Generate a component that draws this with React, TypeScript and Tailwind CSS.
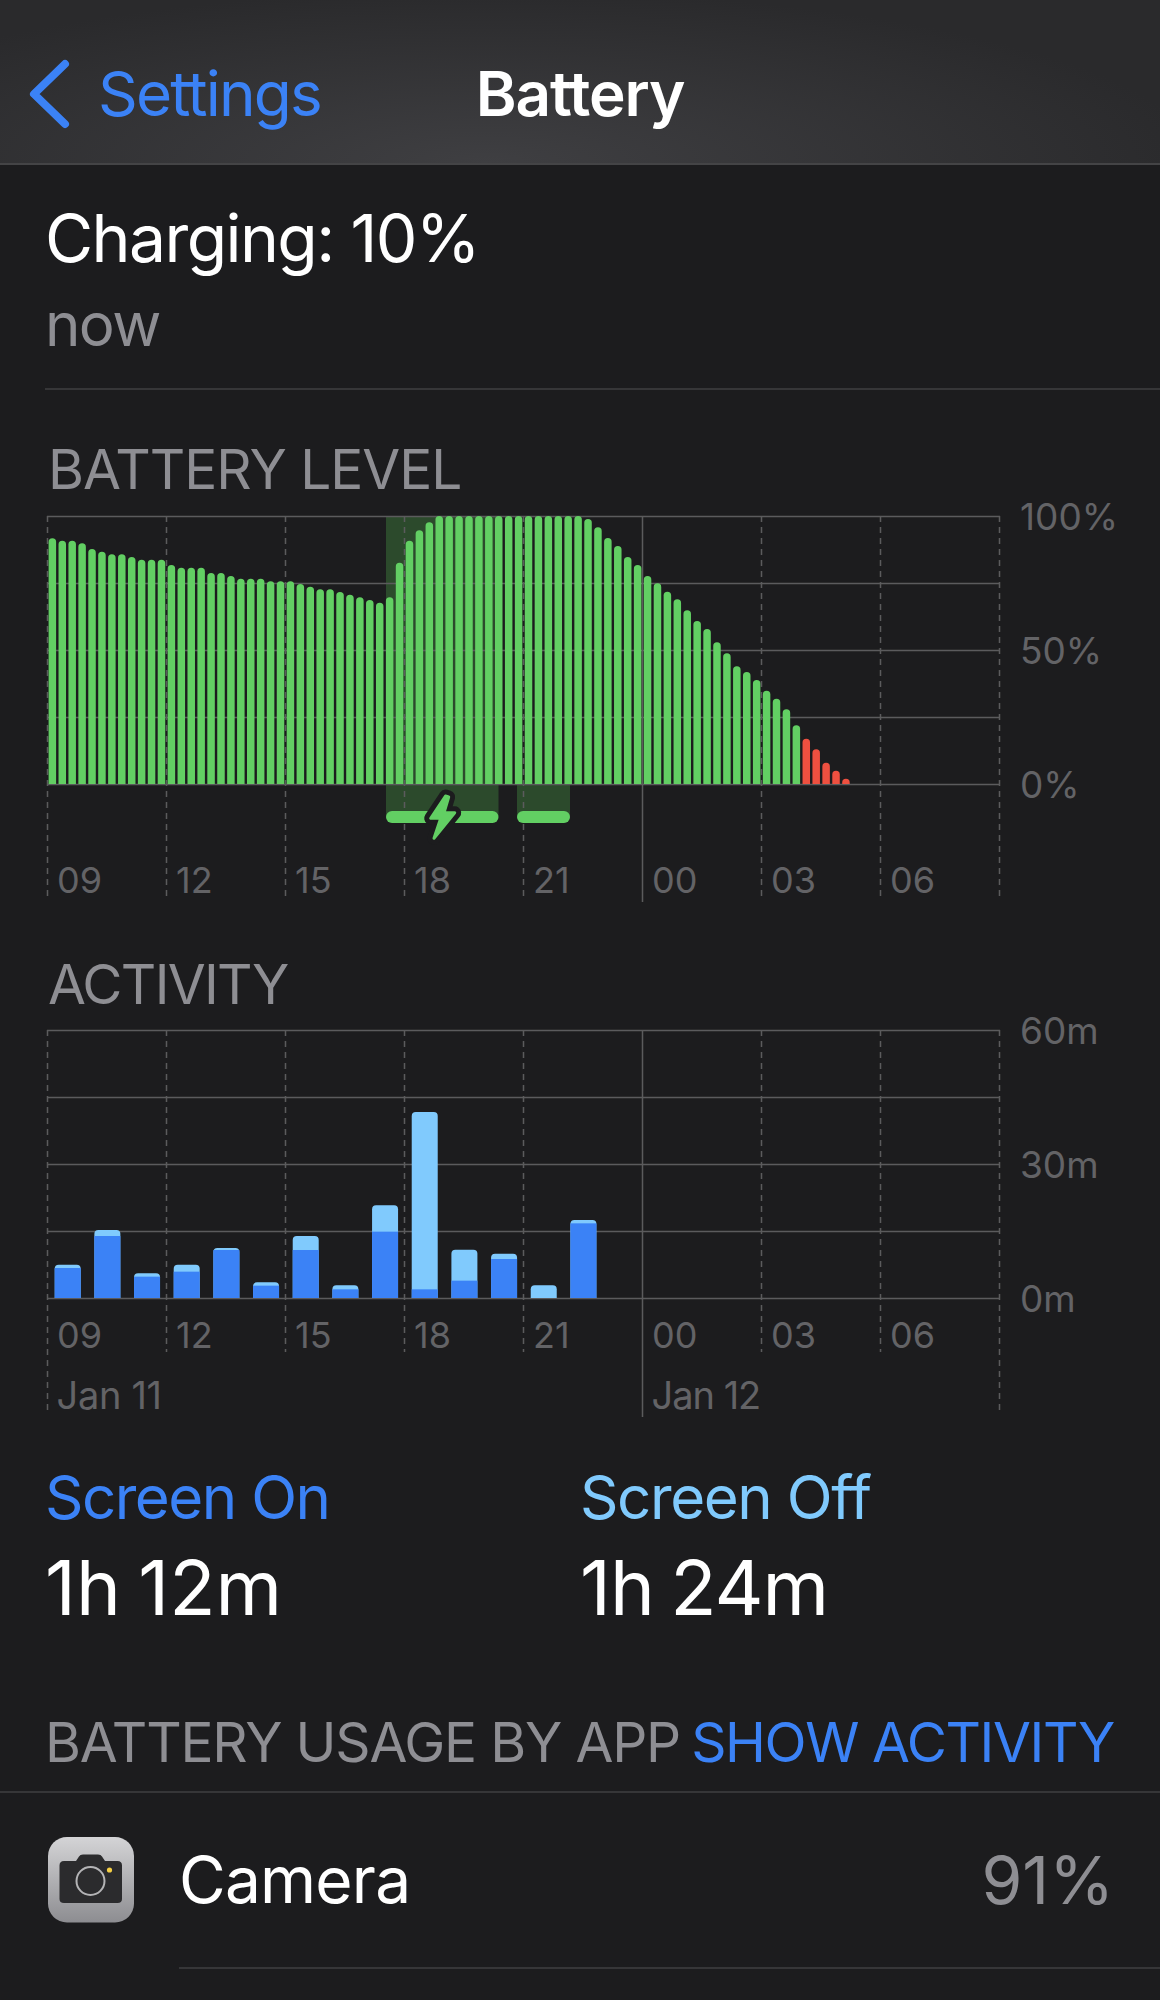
const batteryTops = [
  115, 122, 122, 130, 147, 155, 163, 163, 171, 179, 179, 179, 195, 203, 203, 203, 219, 219, 228, 236, 236, 236, 244, 244,
  244, 252, 260, 268, 268, 276, 284, 292, 300, 308, 292, 188, 122, 91, 67, 48, 48, 48, 48, 48, 48, 48, 48, 48, 48, 48,
  48, 48, 48, 48, 57, 82, 114, 138, 171, 195, 228, 250, 275, 298, 331, 363, 387, 427, 460, 499, 516, 540, 572, 596, 628, 676,
  716, 748, 788, 812, 836,
]

// top of bar, top of the blue part (zoomed px)
const activity = [
  [794, 804], [690, 708], [820, 830], [794, 815], [744, 750], [847, 857], [708, 750],
  [856, 868], [616, 695], [336, 868], [749, 842], [761, 777], [856, 894], [660, 670],
]

const gridLine = "#5b5b5d"
const ticks = [0, 1, 2, 3, 4, 5, 6, 7, 8]
const levels = [0, 1, 2, 3, 4]
const bolt = "M445.5 796L430.7 818.3H440.7L434 838.3L454.7 812.7H444L448.7 797Z"

const topRounded = (x: number, y: number, w: number, bottom: number) => {
  const r = Math.min(w / 2, 4, bottom - y)
  return `M${x} ${bottom}V${y + r}A${r} ${r} 0 0 1 ${x + r} ${y}H${x + w - r}A${r} ${r} 0 0 1 ${x + w} ${y + r}V${bottom}Z`
}

const BatteryPlot = () => (
  <svg width="956" height="388" viewBox="46 515 956 388" className="col-start-1 row-start-1 block">
    <rect x="386" y="516" width="112.5" height="300" fill="#2c4a2c" />
    <rect x="517" y="784" width="53" height="32" fill="#2c4a2c" />
    {levels.map((l) => (
      <line key={l} x1="47" x2="1000" y1={516.5 + l * 67} y2={516.5 + l * 67} stroke={gridLine} strokeWidth="1.5" />
    ))}
    {ticks.map((k) => (
      <line
        key={k}
        x1={47.5 + k * 119}
        x2={47.5 + k * 119}
        y1="516"
        y2={k === 5 ? 902 : 897}
        stroke={gridLine}
        strokeWidth="1.5"
        strokeDasharray={k === 5 ? undefined : "6 5"}
      />
    ))}
    {batteryTops.map((top, i) => (
      <path
        key={i}
        d={topRounded(48.6 + i * 9.92, 500 + top / 3, 7.5, 784)}
        fill={i >= 76 ? "#ee5040" : "#62cf63"}
      />
    ))}
    <rect x="386" y="811" width="112.5" height="12" rx="6" fill="#62cf63" />
    <rect x="517" y="811" width="53" height="12" rx="6" fill="#62cf63" />
    <path d={bolt} fill="#1c1c1e" stroke="#1c1c1e" strokeWidth="13" strokeLinejoin="round" />
    <path d={bolt} fill="#62cf63" stroke="#62cf63" strokeWidth="3" strokeLinejoin="round" />
  </svg>
)

const ActivityPlot = () => (
  <svg width="956" height="390" viewBox="46 1029 956 390" className="col-start-1 row-start-1 block">
    {levels.map((l) => (
      <line key={l} x1="47" x2="1000" y1={1030.5 + l * 67} y2={1030.5 + l * 67} stroke={gridLine} strokeWidth="1.5" />
    ))}
    {ticks.map((k) => (
      <line
        key={k}
        x1={47.5 + k * 119}
        x2={47.5 + k * 119}
        y1="1030"
        y2={k === 5 ? 1417 : k === 0 || k === 8 ? 1412 : 1352}
        stroke={gridLine}
        strokeWidth="1.5"
        strokeDasharray={k === 5 ? undefined : "6 5"}
      />
    ))}
    {activity.map(([top, blue], i) => {
      const x = 54.7 + i * 39.67
      return (
        <g key={i}>
          <path d={topRounded(x, 1000 + top / 3, 26, 1298)} fill="#80cafd" />
          {blue < 894 && <rect x={x} y={1000 + blue / 3} width="26" height={1298 - (1000 + blue / 3)} fill="#3b82f6" />}
        </g>
      )
    })}
  </svg>
)

const HourLabels = ({ className }: { className: string }) => (
  <div className={`col-start-1 row-start-1 grid grid-cols-[repeat(8,119px)] ml-[1px] text-[36px] leading-[36px] text-[#636366] ${className}`}>
    {["09", "12", "15", "18", "21", "00", "03", "06"].map((h) => (
      <span key={h} className="pl-[10px]">{h}</span>
    ))}
  </div>
)

const AxisLabels = ({ labels }: { labels: string[] }) => (
  <div className="flex flex-col justify-between h-[304px] -mt-[16px] ml-[18px] text-[37px] leading-[36px] text-[#636366]">
    {labels.map((l) => (
      <span key={l}>{l}</span>
    ))}
  </div>
)

const CameraIcon = () => (
  <svg width="86" height="86" viewBox="48 1837 86 86" className="block shrink-0">
    <defs>
      <linearGradient id="camera-bg" x1="0" y1="0" x2="0" y2="1">
        <stop offset="0" stopColor="#d4d4d6" />
        <stop offset="1" stopColor="#8d8d91" />
      </linearGradient>
    </defs>
    <rect x="48" y="1837" width="86" height="85.5" rx="19" fill="url(#camera-bg)" />
    <path
      d="M64 1861H76L79 1856.5Q80 1854.5 83 1854.5H98Q101 1854.5 102 1856.5L105 1861H117.5Q122 1861 122 1865.5V1899Q122 1903 117.5 1903H64Q59.5 1903 59.5 1899V1865.5Q59.5 1861 64 1861Z"
      fill="#2b2b2d"
    />
    <circle cx="90.5" cy="1881" r="14" fill="none" stroke="#b4b4b6" strokeWidth="2" />
    <circle cx="109.5" cy="1870" r="2.6" fill="#f5cf45" />
  </svg>
)

export default function App() {
  return (
    <div className="w-[1160px] h-[2000px] overflow-hidden bg-[#1c1c1e] text-white font-['Inter','Noto_Sans',sans-serif]">
      <header className="grid grid-cols-[1fr_auto_1fr] items-center h-[165px] pt-[24px] border-b-2 border-[#444446] bg-[radial-gradient(ellipse_at_42%_100%,#3f3f42_0%,#2a2a2c_75%)]">
        <div className="flex items-center pl-[28px] text-[#3b82f6]">
          <svg width="42" height="70" viewBox="0 0 42 70" className="block">
            <path d="M37 5L6 35L37 65" fill="none" stroke="currentColor" strokeWidth="8" strokeLinecap="round" strokeLinejoin="round" />
          </svg>
          <span className="ml-[28px] text-[62px] leading-[70px] tracking-[-1.8px]">Settings</span>
        </div>
        <h1 className="text-[62px] leading-[70px] font-semibold tracking-[-1.1px]">Battery</h1>
        <div />
      </header>

      <section className="pl-[45px]">
        <p className="mt-[35px] text-[66px] leading-[76px] tracking-[-1.6px]">Charging: 10%</p>
        <p className="mt-[16px] text-[60px] leading-[64px] tracking-[-1.6px] text-[#8e8e93]">now</p>
      </section>
      <div className="mt-[32px] ml-[45px] h-[2px] bg-[#363638]" />

      <h2 className="mt-[47px] ml-[48px] text-[55px] leading-[64px] tracking-[-1px] text-[#8e8e93]">BATTERY LEVEL</h2>
      <div className="mt-[14px] ml-[46px] flex items-start">
        <div className="grid">
          <BatteryPlot />
          <HourLabels className="mt-[347px] self-start" />
        </div>
        <AxisLabels labels={["100%", "50%", "0%"]} />
      </div>

      <h2 className="mt-[49px] ml-[48px] text-[55px] leading-[64px] tracking-[-1.7px] text-[#8e8e93]">ACTIVITY</h2>
      <div className="mt-[13px] ml-[46px] flex items-start">
        <div className="grid">
          <ActivityPlot />
          <div className="col-start-1 row-start-1 mt-[288px] self-start">
            <HourLabels className="" />
            <div className="mt-[24px] ml-[1.5px] grid grid-cols-[595px_1fr] text-[38px] leading-[36px] text-[#636366]">
              <span className="pl-[9px] tracking-[-0.3px]">Jan 11</span>
              <span className="pl-[9px] tracking-[-1px]">Jan 12</span>
            </div>
          </div>
        </div>
        <AxisLabels labels={["60m", "30m", "0m"]} />
      </div>

      <section className="mt-[44px] ml-[45px] grid grid-cols-[535px_1fr]">
        <div>
          <p className="text-[60px] leading-[68px] tracking-[-1.5px] text-[#3b82f6]">Screen On</p>
          <p className="mt-[14px] text-[76px] leading-[84px] whitespace-nowrap [word-spacing:-4px]">1h 12m</p>
        </div>
        <div>
          <p className="text-[60px] leading-[68px] tracking-[-1.4px] text-[#80cafd]">Screen Off</p>
          <p className="mt-[14px] text-[76px] leading-[84px] whitespace-nowrap tracking-[-1px] [word-spacing:-4px]">1h 24m</p>
        </div>
      </section>

      <div className="mt-[81px] ml-[45px] mr-[46px] flex justify-between text-[55px] leading-[64px] whitespace-nowrap">
        <span className="tracking-[-1.2px] text-[#8e8e93]">BATTERY USAGE BY APP</span>
        <span className="tracking-[-1.4px] text-[#3b82f6]">SHOW ACTIVITY</span>
      </div>
      <div className="mt-[17px] h-[2px] bg-[#363638]" />

      <div className="flex items-center h-[174px] pl-[48px] pr-[46px]">
        <CameraIcon />
        <span className="ml-[45px] text-[64px] leading-[76px] tracking-[-0.8px]">Camera</span>
        <span className="ml-auto text-[66px] leading-[76px] text-[#8e8e93]">91%</span>
      </div>
      <div className="ml-[179px] h-[2px] bg-[#363638]" />
    </div>
  )
}
